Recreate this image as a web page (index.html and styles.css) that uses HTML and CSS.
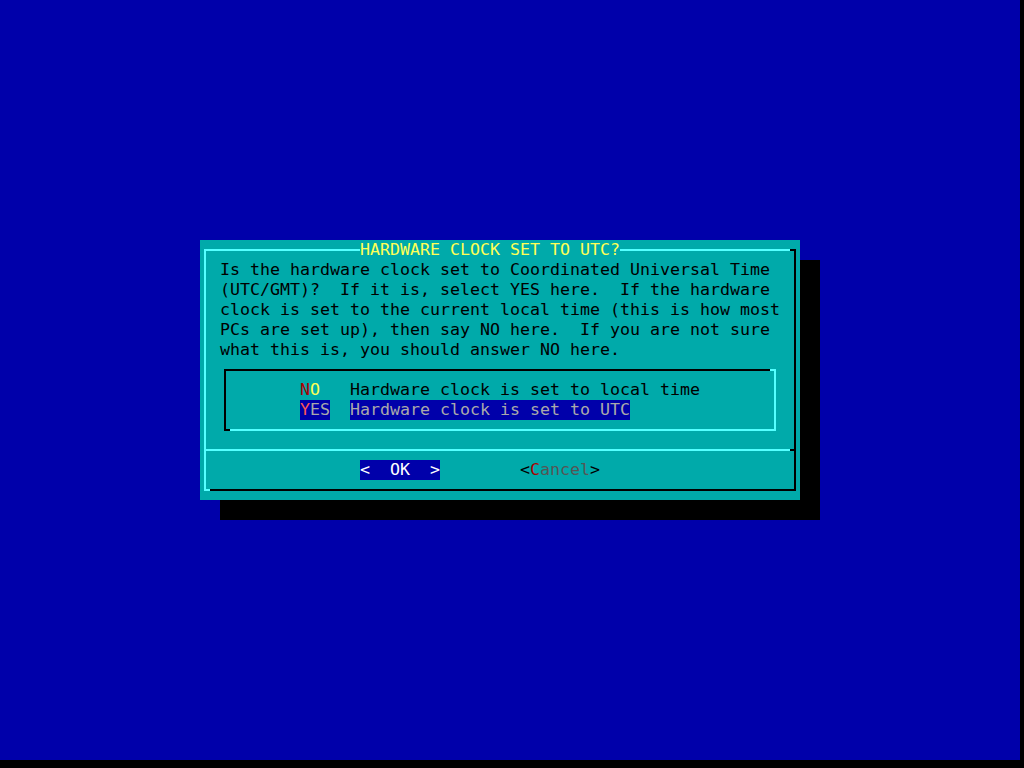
FILE: index.html
```html
<!DOCTYPE html>
<html lang="en">
<head>
    <meta charset="UTF-8">
    <meta name="viewport" content="width=device-width, initial-scale=1.0">
    <title>Hardware clock</title>
    <link rel="stylesheet" href="styles.css">
</head>
<body>
    <div class="screen">
        <div class="dialog">
            <div class="frame">
                <div class="title">HARDWARE CLOCK SET TO UTC?</div>
                <div class="message">Is the hardware clock set to Coordinated Universal Time
(UTC/GMT)?  If it is, select YES here.  If the hardware
clock is set to the current local time (this is how most
PCs are set up), then say NO here.  If you are not sure
what this is, you should answer NO here.</div>

                <div class="menu">
                    <div class="item">
                        <span class="tag"><span class="hot">N</span>O</span>
                        <span class="desc">Hardware clock is set to local time</span>
                    </div>
                    <div class="item selected">
                        <span class="tag"><span class="hot">Y</span>ES</span>
                        <span class="desc">Hardware clock is set to UTC</span>
                    </div>
                </div>

                <div class="separator"></div>

                <div class="buttons">
                    <span class="btn active">&lt;  OK  &gt;</span>
                    <span class="btn">&lt;<span class="hot">C</span><span class="label">ancel</span>&gt;</span>
                </div>
            </div>
        </div>
    </div>
</body>
</html>
```

FILE: styles.css
```css
* {
    margin: 0;
    padding: 0;
    box-sizing: border-box;
}

body {
    background: #000;
    font-family: 'DejaVu Sans Mono', 'Liberation Mono', monospace;
    font-size: 16.61px;
    line-height: 20px;
}

/* 102 x 38 character cells of 10 x 20 px */
.screen {
    width: 1020px;
    height: 760px;
    background: #0000aa;
    display: flex;
    justify-content: center;
    align-items: center;
}

.dialog {
    width: 600px;
    height: 260px;
    margin: 0 20px 20px 0;
    padding: 9px 4px;
    background: #00aaaa;
    box-shadow: 20px 20px 0 #000;
    color: #000;
}

/* line-drawing frame: light top/left, dark bottom/right */
.frame {
    position: relative;
    height: 242px;
    border: 2px solid;
    border-color: #55ffff #000 #000 #55ffff;
}

.frame::before {
    content: '';
    position: absolute;
    top: -2px;
    right: -2px;
    width: 6px;
    height: 2px;
    background: #000;
}

.frame::after {
    content: '';
    position: absolute;
    bottom: -2px;
    left: -2px;
    width: 6px;
    height: 2px;
    background: #55ffff;
}

.title {
    width: 260px;
    margin: -11px 0 0 154px;
    background: #00aaaa;
    color: #ffff55;
    white-space: pre;
}

.message {
    margin-left: 14px;
    white-space: pre;
}

.menu {
    position: relative;
    width: 552px;
    height: 62px;
    margin: 9px 0 0 18px;
    padding: 9px 0 0 74px;
    border: 2px solid;
    border-color: #000 #55ffff #55ffff #000;
}

.menu::before {
    content: '';
    position: absolute;
    top: -2px;
    right: -2px;
    width: 6px;
    height: 2px;
    background: #55ffff;
}

.menu::after {
    content: '';
    position: absolute;
    bottom: -2px;
    left: -2px;
    width: 6px;
    height: 2px;
    background: #000;
}

.item {
    display: flex;
    gap: 20px;
    height: 20px;
    white-space: pre;
}

.tag {
    width: 30px;
    color: #ffff55;
}

.tag .hot { color: #aa0000; }

.selected .tag {
    background: #0000aa;
    color: #aaaaaa;
}

.selected .tag .hot { color: #ff5555; }

.selected .desc {
    background: #0000aa;
    color: #aaaaaa;
}

.separator {
    height: 2px;
    margin-top: 18px;
    background: linear-gradient(to right, #55ffff calc(100% - 4px), #000 0);
}

.buttons {
    display: flex;
    gap: 80px;
    margin-top: 9px;
    padding-left: 154px;
    white-space: pre;
}

.btn .hot { color: #aa0000; }
.btn .label { color: #555555; }

.btn.active {
    background: #0000aa;
    color: #fff;
}
```
